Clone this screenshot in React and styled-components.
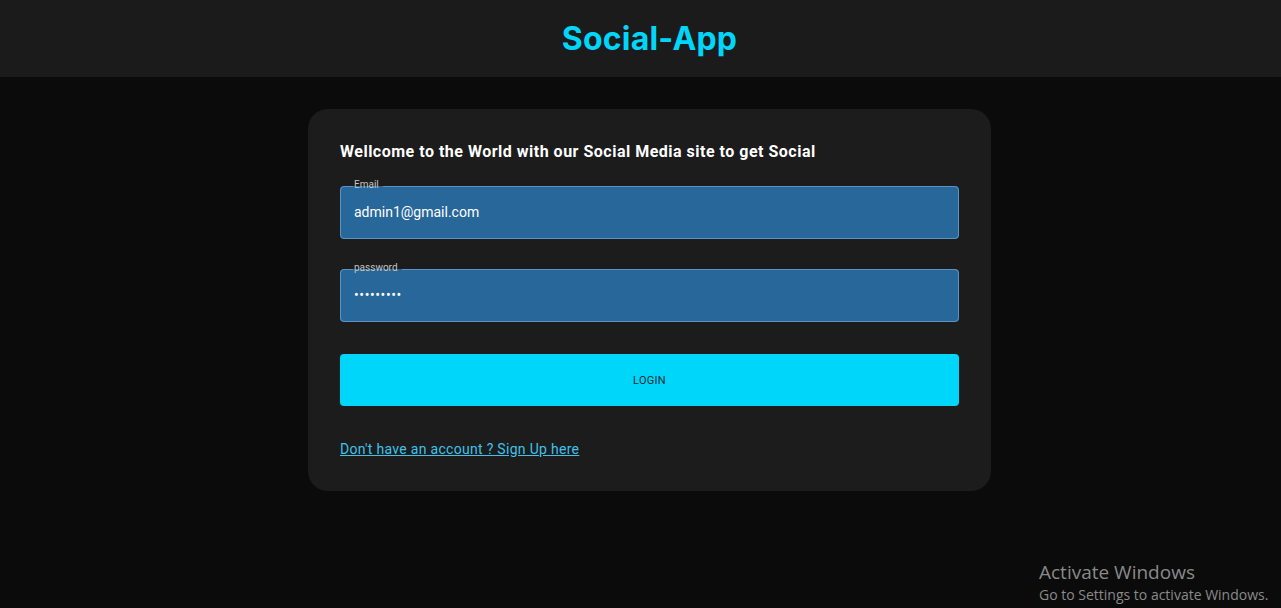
import React from 'react';
import styled, { createGlobalStyle } from 'styled-components';

const GlobalStyle = createGlobalStyle`
  html, body {
    margin: 0;
    padding: 0;
    background: #0b0b0b;
    font-family: Roboto, "Liberation Sans", sans-serif;
    overflow: hidden;
  }
`;

const Page = styled.div`
  position: relative;
  min-height: 608px;
  background: #0b0b0b;
`;

const Header = styled.header`
  height: 77px;
  background: #1b1b1b;
  display: flex;
  align-items: center;
  justify-content: center;
  padding-left: 18px;
`;

const Brand = styled.h1`
  margin: 0;
  font-family: Inter, "Liberation Sans", sans-serif;
  font-size: 32px;
  font-weight: 700;
  color: #00d5fa;
  letter-spacing: 0.2px;
`;

const Main = styled.main`
  display: flex;
  justify-content: center;
  padding: 32px 0 0 18px;
`;

const Card = styled.form`
  width: 683px;
  box-sizing: border-box;
  background: #1c1c1c;
  border-radius: 20px;
  padding: 33px 32px 34px;
  display: flex;
  flex-direction: column;
`;

const Heading = styled.h2`
  margin: 0 0 18px;
  font-size: 16px;
  font-weight: 700;
  line-height: 20px;
  color: #ffffff;
  letter-spacing: 0.5px;
`;

const Field = styled.fieldset`
  margin: 0 0 24px;
  padding: 0 13px 6px;
  border: 1px solid #5c93c4;
  border-radius: 4px;
  background: #27679a;
  display: block;
`;

const Legend = styled.legend`
  padding: 0 4px 2px 1px;
  margin-left: -1px;
  font-size: 10px;
  line-height: 10px;
  color: #c4c4c4;
`;

const Input = styled.input`
  display: block;
  width: 100%;
  height: 40px;
  box-sizing: border-box;
  border: none;
  outline: none;
  background: transparent;
  color: #ffffff;
  font-family: Roboto, "Liberation Sans", sans-serif;
  font-size: 14px;
  letter-spacing: ${p => (p.type === 'password' ? '0.6px' : '0')};
  padding: 0;
`;

const LoginButton = styled.button`
  margin-top: 8px;
  height: 52px;
  border: none;
  border-radius: 4px;
  background: #00d5fa;
  color: #1a2a30;
  font-family: Roboto, "Liberation Sans", sans-serif;
  font-size: 11px;
  letter-spacing: 0.3px;
  cursor: pointer;
`;

const SignUp = styled.a`
  margin-top: 35px;
  align-self: flex-start;
  font-size: 14px;
  line-height: 16px;
  color: #3fc3ea;
  text-decoration: underline;
  letter-spacing: 0.3px;
`;

const Watermark = styled.div`
  position: absolute;
  left: 1039px;
  top: 561px;
  font-family: "Open Sans", "Liberation Sans", sans-serif;
  color: #8a8a8a;
  line-height: 1.2;
`;

const WatermarkTitle = styled.div`
  font-size: 19px;
`;

const WatermarkText = styled.div`
  font-size: 14px;
  margin-top: 3px;
`;

export default function App() {
  return (
    <Page>
      <GlobalStyle />
      <Header>
        <Brand>Social-App</Brand>
      </Header>
      <Main>
        <Card onSubmit={e => e.preventDefault()}>
          <Heading>Wellcome to the World with our Social Media site to get Social</Heading>
          <Field>
            <Legend>Email</Legend>
            <Input type="email" defaultValue="admin1@gmail.com" />
          </Field>
          <Field>
            <Legend>password</Legend>
            <Input type="password" defaultValue="123456789" />
          </Field>
          <LoginButton type="submit">LOGIN</LoginButton>
          <SignUp href="#">Don't have an account ? Sign Up here</SignUp>
        </Card>
      </Main>
      <Watermark>
        <WatermarkTitle>Activate Windows</WatermarkTitle>
        <WatermarkText>Go to Settings to activate Windows.</WatermarkText>
      </Watermark>
    </Page>
  );
}
